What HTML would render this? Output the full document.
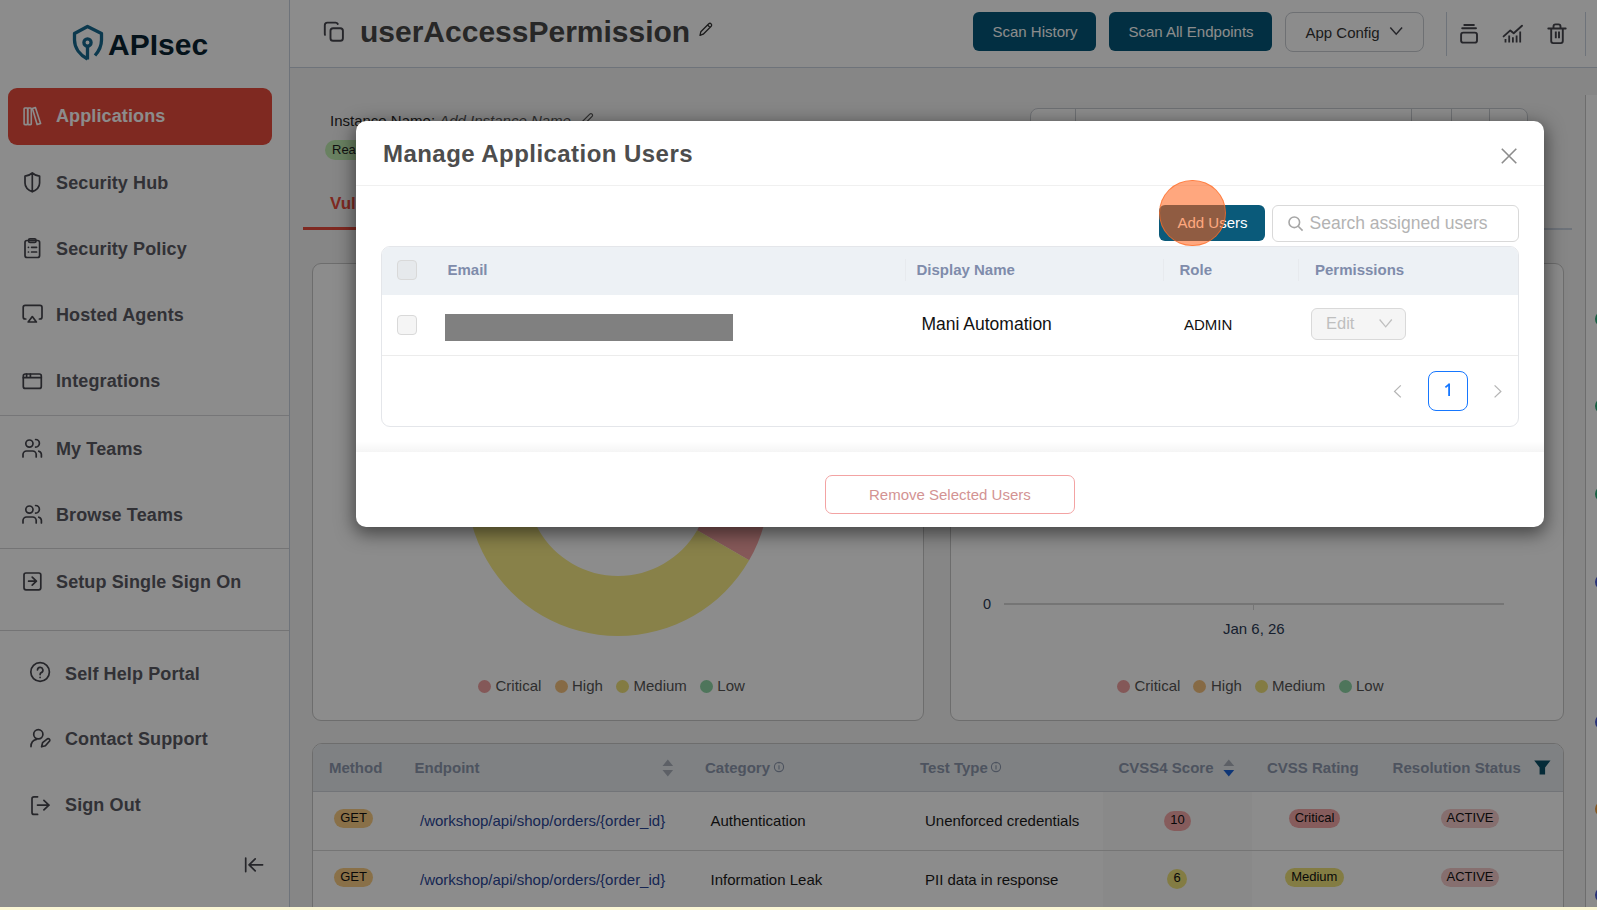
<!DOCTYPE html>
<html><head><meta charset="utf-8">
<style>
*{box-sizing:border-box;margin:0;padding:0}
html,body{width:1597px;height:910px;overflow:hidden;background:#f5f5f5;font-family:"Liberation Sans",sans-serif;color:#222;position:relative}
.tx{position:absolute;line-height:1;white-space:nowrap}
.bx{position:absolute}
svg{position:absolute;overflow:visible}
</style></head><body>
<div class="bx" style="left:0px;top:0px;width:289px;height:910px;background:#fff"></div>
<div class="bx" style="left:289px;top:0px;width:1px;height:910px;background:#c9d1de"></div>
<div class="bx" style="left:0px;top:415px;width:289px;height:1px;background:#d8d8da"></div>
<div class="bx" style="left:0px;top:548px;width:289px;height:1px;background:#d4d4d6"></div>
<div class="bx" style="left:0px;top:630px;width:289px;height:1px;background:#d4d4d6"></div>
<div class="bx" style="left:8px;top:88px;width:264px;height:57px;background:#e84c3d;border-radius:9px"></div>
<div class="tx " style="left:56px;top:107px;font-size:18px;color:#fff;font-weight:bold;letter-spacing:0.12px">Applications</div>
<div class="tx " style="left:56px;top:174px;font-size:18px;color:#5a5a63;font-weight:bold;letter-spacing:0.12px">Security Hub</div>
<div class="tx " style="left:56px;top:240px;font-size:18px;color:#5a5a63;font-weight:bold;letter-spacing:0.12px">Security Policy</div>
<div class="tx " style="left:56px;top:306px;font-size:18px;color:#5a5a63;font-weight:bold;letter-spacing:0.12px">Hosted Agents</div>
<div class="tx " style="left:56px;top:372px;font-size:18px;color:#5a5a63;font-weight:bold;letter-spacing:0.12px">Integrations</div>
<div class="tx " style="left:56px;top:440px;font-size:18px;color:#5a5a63;font-weight:bold;letter-spacing:0.12px">My Teams</div>
<div class="tx " style="left:56px;top:506px;font-size:18px;color:#5a5a63;font-weight:bold;letter-spacing:0.12px">Browse Teams</div>
<div class="tx " style="left:56px;top:573px;font-size:18px;color:#5a5a63;font-weight:bold;letter-spacing:0.12px">Setup Single Sign On</div>
<div class="tx " style="left:65px;top:665px;font-size:18px;color:#5a5a63;font-weight:bold;letter-spacing:0.12px">Self Help Portal</div>
<div class="tx " style="left:65px;top:730px;font-size:18px;color:#5a5a63;font-weight:bold;letter-spacing:0.12px">Contact Support</div>
<div class="tx " style="left:65px;top:796px;font-size:18px;color:#5a5a63;font-weight:bold;letter-spacing:0.12px">Sign Out</div>
<svg style="left:0;top:0" width="290" height="910" viewBox="0 0 290 910">
<g fill="none" stroke="#17698f" stroke-width="3.3" stroke-linejoin="round">
  <path d="M87.5 59 C80 55 74.5 48 74.5 40 L74.5 33.5 L87.5 26.5 L101.5 33.5 L101.5 40 C101.5 46 99 51 95 55.5"/>
  <circle cx="87.5" cy="42.5" r="3.6"/>
  <path d="M87.5 46 L87.5 59.5"/>
</g>
<text x="108" y="54.7" font-family="Liberation Sans" font-weight="bold" font-size="30" fill="#0a2432">APIsec</text>
<g fill="none" stroke="#fff" stroke-width="1.6" stroke-linejoin="round" stroke-linecap="round">
  <rect x="24.1" y="108" width="3.6" height="16.6" rx="0.8"/>
  <rect x="27.7" y="108" width="3.6" height="16.6" rx="0.8"/>
  <path d="M32.4 108.6 L35.4 107.6 L40.6 123.4 L37.1 124.6 Z"/>
</g>
<g fill="none" stroke="#45454d" stroke-width="1.7" stroke-linejoin="round" stroke-linecap="round">
  <path d="M32.3 173 C30 175 27.5 176 25 176.2 L25 183 C25 187 28 190 32.3 191.8 C36.6 190 39.6 187 39.6 183 L39.6 176.2 C37 176 34.6 175 32.3 173 Z M32.3 173 L32.3 191.8"/>
  <rect x="25" y="240.5" width="14.6" height="17" rx="2"/>
  <rect x="28.6" y="238.8" width="7.4" height="3.6" rx="1.4"/>
  <path d="M28.4 247.3 h0.1 M31.6 247.3 h5 M28.4 252 h0.1 M31.6 252 h5"/>
  <path d="M25.8 319 h-0.6 a2 2 0 0 1 -2 -2 v-9.6 a2 2 0 0 1 2 -2 h14.8 a2 2 0 0 1 2 2 v9.6 a2 2 0 0 1 -2 2 h-0.6"/>
  <path d="M32.3 316.6 L36.4 322 L28.2 322 Z"/>
  <rect x="23.3" y="374" width="18" height="14.4" rx="2"/>
  <path d="M23.3 377.7 h18 M26.6 374 v3.7 M30.4 374 v3.7"/>
  <circle cx="29.4" cy="443.6" r="3.6"/>
  <path d="M23 457 v-2.4 a3.6 3.6 0 0 1 3.6 -3.6 h6 a3.6 3.6 0 0 1 3.6 3.6 v2.4"/>
  <path d="M35.6 439.5 a3.8 3.8 0 0 1 0 7.6"/>
  <path d="M38.8 451.2 a3.6 3.6 0 0 1 2.6 3.4 v2.4"/>
  <circle cx="29.4" cy="509.6" r="3.6"/>
  <path d="M23 523 v-2.4 a3.6 3.6 0 0 1 3.6 -3.6 h6 a3.6 3.6 0 0 1 3.6 3.6 v2.4"/>
  <path d="M35.6 505.5 a3.8 3.8 0 0 1 0 7.6"/>
  <path d="M38.8 517.2 a3.6 3.6 0 0 1 2.6 3.4 v2.4"/>
  <rect x="24" y="573" width="16.8" height="16.8" rx="2"/>
  <path d="M28.6 581.2 h7.8 M32.2 577.2 l4.2 4 l-4.2 4"/>
  <circle cx="40.1" cy="672" r="9.3"/>
  <path d="M37.5 670 a2.7 2.7 0 1 1 3.8 2.6 c-0.7 0.4 -1.2 1 -1.2 1.8 v0.2 M40.1 677.4 v0.1"/>
  <circle cx="38.3" cy="734.3" r="4.6"/>
  <path d="M31 746.6 C31 743 33 740 36.5 739.3"/>
  <path d="M41.6 746.8 L42.6 742.6 L47.4 738.8 a1.6 1.6 0 0 1 2.2 2.2 L45.4 745.8 Z"/>
  <path d="M37.6 796.8 h-3.6 a2 2 0 0 0 -2 2 v13.6 a2 2 0 0 0 2 2 h3.6 M37.5 805.1 h11.6 M43.9 800.3 l5 4.8 l-5 4.8"/>
  <path d="M245.7 858 v13.6 M249 864.8 h13.6 M255.2 858.8 l-6.1 6 l6.1 6"/>
</g>
</svg>
<div class="bx" style="left:290px;top:0px;width:1307px;height:67px;background:#fff"></div>
<div class="bx" style="left:290px;top:67px;width:1307px;height:1px;background:#c9d1de"></div>
<div class="tx " style="left:360px;top:17px;font-size:30px;color:#474747;font-weight:bold;">userAccessPermission</div>
<svg style="left:0;top:0" width="1597" height="70" viewBox="0 0 1597 70">
<g fill="none" stroke="#45454d" stroke-width="1.9" stroke-linejoin="round" stroke-linecap="round">
  <path d="M325 34.8 a2.2 2.2 0 0 1 -0.2 -1 v-8.6 a2.6 2.6 0 0 1 2.6 -2.6 h8 a2.6 2.6 0 0 1 2.4 1.4"/>
  <rect x="330.5" y="28.2" width="12.4" height="12.6" rx="2.6"/>
</g>
<g fill="none" stroke="#333" stroke-width="1.3" stroke-linejoin="round">
  <path d="M700 35.4 L700.8 31.8 L708.8 23.8 a1.7 1.7 0 0 1 2.4 2.4 L703.2 34.2 Z M707.6 25 l2.4 2.4"/>
</g>
<g fill="none" stroke="#45454d" stroke-width="1.9" stroke-linejoin="round" stroke-linecap="round">
  <path d="M1464.3 25 h9.6 M1462.2 28.3 h13.8"/>
  <rect x="1461.1" y="32.6" width="15.9" height="10" rx="2.2"/>
  <path d="M1503.6 36.4 L1510.3 30.4 L1513.7 33.2 L1522 25.7"/>
  <path d="M1505.5 42.6 v-3.6 M1509.2 42.6 v-7.2 M1512.9 42.6 v-5.4 M1516.6 42.6 v-7.2 M1520.2 42.6 v-11" stroke-linecap="butt" stroke-width="1.8"/>
  <path d="M1548.3 28.5 h17.4 M1551.2 28.5 v12.6 a2 2 0 0 0 2 2 h7.6 a2 2 0 0 0 2 -2 v-12.6 M1553.5 28.2 v-1.8 a2 2 0 0 1 2 -2 h3 a2 2 0 0 1 2 2 v1.8"/>
  <path d="M1555.8 31.6 v6.6 M1559 31.6 v6.6" stroke-linecap="butt"/>
</g>
</svg>
<div class="bx" style="left:973px;top:12px;width:123px;height:39px;background:#045778;border-radius:6px"></div>
<div class="tx " style="left:992.5px;top:24px;font-size:15px;color:#fff;font-weight:normal;">Scan History</div>
<div class="bx" style="left:1109px;top:12px;width:163px;height:39px;background:#045778;border-radius:6px"></div>
<div class="tx " style="left:1128.5px;top:24px;font-size:15px;color:#fff;font-weight:normal;">Scan All Endpoints</div>
<div class="bx" style="left:1285px;top:12px;width:139px;height:40px;background:#fff;border:1px solid #c8ccd2;border-radius:8px"></div>
<div class="tx " style="left:1305.5px;top:25px;font-size:15px;color:#333;font-weight:normal;">App Config</div>
<svg style="left:0;top:0" width="1597" height="70"><path d="M1390.3 27.6 l5.9 6.6 l5.9 -6.6" fill="none" stroke="#45454d" stroke-width="1.5"/></svg>
<div class="bx" style="left:1446px;top:12px;width:1px;height:44px;background:#c9d1de"></div>
<div class="bx" style="left:1585px;top:12px;width:1px;height:44px;background:#c9d1de"></div>
<div class="tx " style="left:330px;top:112.5px;font-size:15px;color:#262626;font-weight:normal;">Instance Name: <i style="color:#555">Add Instance Name</i></div>
<svg style="left:0;top:0" width="1597" height="200"><path d="M581.5 125 L582.3 121.6 L589.8 114.1 a1.6 1.6 0 0 1 2.3 2.3 L584.6 123.9 Z" fill="none" stroke="#555" stroke-width="1.2"/></svg>
<div class="bx" style="left:325px;top:140px;width:90px;height:20px;background:#c0ecb1;border-radius:10px"></div>
<div class="tx " style="left:332px;top:143px;font-size:13px;color:#222;font-weight:normal;">Ready</div>
<div class="tx " style="left:330px;top:195px;font-size:17px;color:#e84c3d;font-weight:bold;">Vulnerabilities</div>
<div class="bx" style="left:303px;top:228px;width:1269px;height:1.5px;background:#c9d1de"></div>
<div class="bx" style="left:303px;top:227px;width:200px;height:3px;background:#e84c3d"></div>
<div class="bx" style="left:1030px;top:108px;width:498px;height:40px;background:#fff;border:1px solid #c8ccd2;border-radius:8px"></div>
<div class="bx" style="left:1075px;top:108px;width:1px;height:40px;background:#c8ccd2"></div>
<div class="bx" style="left:1411px;top:108px;width:1px;height:40px;background:#c8ccd2"></div>
<div class="bx" style="left:1451px;top:108px;width:1px;height:40px;background:#c8ccd2"></div>
<div class="bx" style="left:1489px;top:108px;width:1px;height:40px;background:#c8ccd2"></div>
<div class="bx" style="left:1585px;top:95px;width:12px;height:815px;background:#fff;border-left:1px solid #c6c6c6"></div>
<div class="bx" style="left:1595px;top:311px;width:16px;height:16px;border-radius:50%;background:#2fae7a"></div>
<div class="bx" style="left:1595px;top:398px;width:16px;height:16px;border-radius:50%;background:#2fae7a"></div>
<div class="bx" style="left:1595px;top:485.5px;width:16px;height:16px;border-radius:50%;background:#2fae7a"></div>
<div class="bx" style="left:1595px;top:573.5px;width:16px;height:16px;border-radius:50%;background:#4a5bd8"></div>
<div class="bx" style="left:1595px;top:713.7px;width:16px;height:16px;border-radius:50%;background:#4a5bd8"></div>
<div class="bx" style="left:1595px;top:801px;width:16px;height:16px;border-radius:50%;background:#f0a040"></div>
<div class="bx" style="left:1595px;top:887px;width:16px;height:16px;border-radius:50%;background:#4a5bd8"></div>
<div class="bx" style="left:312px;top:263px;width:612px;height:458px;background:#fff;border:1px solid #c6c6c6;border-radius:9px"></div>
<div class="bx" style="left:950px;top:263px;width:614px;height:458px;background:#fff;border:1px solid #c6c6c6;border-radius:9px"></div>
<svg style="left:0;top:0" width="1597" height="910"><path d="M618.00 333.20 A151.4 151.4 0 0 1 749.12 560.30 L697.15 530.30 A91.4 91.4 0 0 0 618.00 393.20 Z" fill="#f5a3a3"/><path d="M749.12 560.30 A151.4 151.4 0 1 1 617.97 333.20 L617.98 393.20 A91.4 91.4 0 1 0 697.15 530.30 Z" fill="#f7eb85"/></svg>
<div class="bx" style="left:477.9px;top:679.5px;width:13px;height:13px;border-radius:50%;background:#f0a0a0"></div>
<div class="tx " style="left:495.5px;top:678px;font-size:15px;color:#555;font-weight:normal;">Critical</div>
<div class="bx" style="left:554.5px;top:679.5px;width:13px;height:13px;border-radius:50%;background:#f5c27e"></div>
<div class="tx " style="left:572px;top:678px;font-size:15px;color:#555;font-weight:normal;">High</div>
<div class="bx" style="left:615.6px;top:679.5px;width:13px;height:13px;border-radius:50%;background:#eee07a"></div>
<div class="tx " style="left:633.5px;top:678px;font-size:15px;color:#555;font-weight:normal;">Medium</div>
<div class="bx" style="left:700.0px;top:679.5px;width:13px;height:13px;border-radius:50%;background:#8fd5a6"></div>
<div class="tx " style="left:717.3px;top:678px;font-size:15px;color:#555;font-weight:normal;">Low</div>
<div class="bx" style="left:1116.7px;top:679.5px;width:13px;height:13px;border-radius:50%;background:#f0a0a0"></div>
<div class="tx " style="left:1134.5px;top:678px;font-size:15px;color:#555;font-weight:normal;">Critical</div>
<div class="bx" style="left:1193.2px;top:679.5px;width:13px;height:13px;border-radius:50%;background:#f5c27e"></div>
<div class="tx " style="left:1211px;top:678px;font-size:15px;color:#555;font-weight:normal;">High</div>
<div class="bx" style="left:1254.5px;top:679.5px;width:13px;height:13px;border-radius:50%;background:#eee07a"></div>
<div class="tx " style="left:1272px;top:678px;font-size:15px;color:#555;font-weight:normal;">Medium</div>
<div class="bx" style="left:1338.7px;top:679.5px;width:13px;height:13px;border-radius:50%;background:#8fd5a6"></div>
<div class="tx " style="left:1356px;top:678px;font-size:15px;color:#555;font-weight:normal;">Low</div>
<div class="tx " style="left:983px;top:597px;font-size:14.5px;color:#2a3a55;font-weight:normal;">0</div>
<div class="bx" style="left:1004px;top:603px;width:500px;height:1.5px;background:#d6d6d6"></div>
<div class="bx" style="left:1252.5px;top:603px;width:1.5px;height:7px;background:#d6d6d6"></div>
<div class="tx " style="left:1223px;top:620.5px;font-size:15px;color:#2a3a55;font-weight:normal;">Jan 6, 26</div>
<div class="bx" style="left:312px;top:743px;width:1252px;height:170px;background:#fff;border:1px solid #c6c6c6;border-radius:10px 10px 0 0;overflow:hidden"></div>
<div class="bx" style="left:313px;top:744px;width:1250px;height:47px;background:#e7ebef;border-radius:9px 9px 0 0"></div>
<div class="bx" style="left:1103px;top:792px;width:149px;height:118px;background:rgba(0,0,0,0.025)"></div>
<div class="bx" style="left:313px;top:791px;width:1250px;height:1px;background:#d0d4da"></div>
<div class="bx" style="left:313px;top:850px;width:1250px;height:1px;background:#d6d6d6"></div>
<div class="tx " style="left:329px;top:759.5px;font-size:15px;color:#8d98ad;font-weight:bold;">Method</div>
<div class="tx " style="left:414.5px;top:759.5px;font-size:15px;color:#8d98ad;font-weight:bold;">Endpoint</div>
<div class="tx " style="left:705px;top:759.5px;font-size:15px;color:#8d98ad;font-weight:bold;">Category</div>
<div class="tx " style="left:920px;top:759.5px;font-size:15px;color:#8d98ad;font-weight:bold;">Test Type</div>
<div class="tx " style="left:1118.5px;top:759.5px;font-size:15px;color:#8d98ad;font-weight:bold;">CVSS4 Score</div>
<div class="tx " style="left:1267px;top:759.5px;font-size:15px;color:#8d98ad;font-weight:bold;">CVSS Rating</div>
<div class="tx " style="left:1392.5px;top:759.5px;font-size:15px;color:#8d98ad;font-weight:bold;letter-spacing:0.05px">Resolution Status</div>
<svg style="left:0;top:0" width="1597" height="910">
<path d="M662.5 766 l5.3 -6.4 l5.3 6.4 Z M662.5 770 l5.3 6.4 l5.3 -6.4 Z" fill="#a9b0bb"/>
<path d="M1223.4 766 l5.4 -6.4 l5.4 6.4 Z" fill="#a9b0bb"/>
<path d="M1223.4 770 l5.4 6.4 l5.4 -6.4 Z" fill="#1d63d8"/>
<g fill="none" stroke="#8d98ad" stroke-width="1.1"><circle cx="779" cy="767" r="4.6"/><path d="M779 765.2 v4.4 M779 763.3 v0.4"/>
<circle cx="996" cy="767" r="4.6"/><path d="M996 765.2 v4.4 M996 763.3 v0.4"/></g>
<path d="M1534.2 760.4 h16.3 l-5.4 7.2 v7 h-5.5 v-7 Z" fill="#0a4f66"/>
</svg>
<div class="bx" style="left:334px;top:809px;width:39px;height:19px;background:#f9cd83;border-radius:9.5px;"></div>
<div class="tx" style="left:334px;top:808px;width:39px;height:19px;line-height:19px;text-align:center;font-size:13px;color:#111">GET</div>
<div class="tx " style="left:420px;top:813px;font-size:15px;color:#2a4697;font-weight:normal;">/workshop/api/shop/orders/{order_id}</div>
<div class="tx " style="left:710.5px;top:813px;font-size:15px;color:#1a1a1a;font-weight:normal;">Authentication</div>
<div class="tx " style="left:925px;top:813px;font-size:15px;color:#1a1a1a;font-weight:normal;">Unenforced credentials</div>
<div class="bx" style="left:1164px;top:811px;width:27px;height:20px;background:#f5a8a8;border-radius:10.0px;"></div>
<div class="tx" style="left:1164px;top:810px;width:27px;height:20px;line-height:20px;text-align:center;font-size:13px;color:#111">10</div>
<div class="bx" style="left:1289px;top:809px;width:51px;height:19px;background:#f5a8a8;border-radius:9.5px;"></div>
<div class="tx" style="left:1289px;top:808px;width:51px;height:19px;line-height:19px;text-align:center;font-size:13px;color:#111">Critical</div>
<div class="bx" style="left:1441px;top:809px;width:58px;height:19px;background:#f5caca;border-radius:9.5px;"></div>
<div class="tx" style="left:1441px;top:808px;width:58px;height:19px;line-height:19px;text-align:center;font-size:13px;color:#111">ACTIVE</div>
<div class="bx" style="left:334px;top:868px;width:39px;height:19px;background:#f9cd83;border-radius:9.5px;"></div>
<div class="tx" style="left:334px;top:867px;width:39px;height:19px;line-height:19px;text-align:center;font-size:13px;color:#111">GET</div>
<div class="tx " style="left:420px;top:872px;font-size:15px;color:#2a4697;font-weight:normal;">/workshop/api/shop/orders/{order_id}</div>
<div class="tx " style="left:710.5px;top:872px;font-size:15px;color:#1a1a1a;font-weight:normal;">Information Leak</div>
<div class="tx " style="left:925px;top:872px;font-size:15px;color:#1a1a1a;font-weight:normal;">PII data in response</div>
<div class="bx" style="left:1167px;top:869px;width:20px;height:20px;background:#eee27a;border-radius:10.0px;"></div>
<div class="tx" style="left:1167px;top:868px;width:20px;height:20px;line-height:20px;text-align:center;font-size:13px;color:#111">6</div>
<div class="bx" style="left:1285px;top:868px;width:58.5px;height:19px;background:#eee27a;border-radius:9.5px;"></div>
<div class="tx" style="left:1285px;top:867px;width:58.5px;height:19px;line-height:19px;text-align:center;font-size:13px;color:#111">Medium</div>
<div class="bx" style="left:1441px;top:868px;width:58px;height:19px;background:#f5caca;border-radius:9.5px;"></div>
<div class="tx" style="left:1441px;top:867px;width:58px;height:19px;line-height:19px;text-align:center;font-size:13px;color:#111">ACTIVE</div>
<div class="bx" style="left:0px;top:907px;width:1597px;height:3px;background:#fbf6d2"></div>
<div class="bx" style="left:0px;top:0px;width:1597px;height:910px;background:rgba(0,0,0,0.45)"></div>
<div class="bx" style="left:0px;top:907px;width:1597px;height:3px;background:#fbf7d6"></div>
<div class="bx" style="left:356px;top:121px;width:1188px;height:406px;background:#fff;border-radius:10px;box-shadow:0 5px 18px 2px rgba(0,0,0,0.5)"></div>
<div class="tx " style="left:383px;top:142px;font-size:24px;color:#4d4d4d;font-weight:bold;letter-spacing:0.45px">Manage Application Users</div>
<svg style="left:0;top:0" width="1597" height="910">
<path d="M1501.8 148.8 L1516.3 163.3 M1516.3 148.8 L1501.8 163.3" stroke="#8c8c8c" stroke-width="1.6"/>
</svg>
<div class="bx" style="left:356px;top:185px;width:1188px;height:1px;background:#f0f0f0"></div>
<div class="bx" style="left:1159px;top:205px;width:106px;height:36px;background:#0a5a7a;border-radius:6px"></div>
<div class="tx " style="left:1177.5px;top:215px;font-size:15px;color:#fff;font-weight:normal;">Add Users</div>
<div class="bx" style="left:1272px;top:205px;width:247px;height:37px;background:#fff;border:1px solid #d9d9d9;border-radius:6px"></div>
<svg style="left:0;top:0" width="1597" height="910">
<g fill="none" stroke="#a6a6a6" stroke-width="1.6"><circle cx="1294.3" cy="222.3" r="5.3"/><path d="M1298.2 226.2 L1302.6 230.6"/></g>
</svg>
<div class="tx " style="left:1309.5px;top:214.5px;font-size:17.5px;color:#b3b3b3;font-weight:normal;">Search assigned users</div>
<div class="bx" style="left:381px;top:246px;width:1138px;height:181px;background:#fff;border:1px solid #e4e6ea;border-radius:9px"></div>
<div class="bx" style="left:382px;top:247px;width:1136px;height:48px;background:#edf1f5;border-radius:8px 8px 0 0"></div>
<div class="bx" style="left:905px;top:259px;width:1px;height:22px;background:#e7eaee"></div>
<div class="bx" style="left:1163px;top:259px;width:1px;height:22px;background:#e7eaee"></div>
<div class="bx" style="left:1298px;top:259px;width:1px;height:22px;background:#e7eaee"></div>
<div class="bx" style="left:382px;top:355px;width:1136px;height:1px;background:#ececec"></div>
<div class="bx" style="left:397px;top:260px;width:20px;height:20px;background:#e6e9ec;border:1px solid #d9d9d9;border-radius:4px"></div>
<div class="bx" style="left:397px;top:315px;width:20px;height:20px;background:#f5f5f5;border:1px solid #d9d9d9;border-radius:4px"></div>
<div class="tx " style="left:447.5px;top:262px;font-size:15px;color:#7f8cab;font-weight:bold;">Email</div>
<div class="tx " style="left:916.5px;top:262px;font-size:15px;color:#7f8cab;font-weight:bold;">Display Name</div>
<div class="tx " style="left:1179.5px;top:262px;font-size:15px;color:#7f8cab;font-weight:bold;">Role</div>
<div class="tx " style="left:1315px;top:262px;font-size:15px;color:#7f8cab;font-weight:bold;">Permissions</div>
<div class="bx" style="left:445px;top:314px;width:288px;height:27px;background:#808080"></div>
<div class="tx " style="left:921.5px;top:316px;font-size:17.5px;color:#111;font-weight:normal;">Mani Automation</div>
<div class="tx " style="left:1184px;top:317px;font-size:15px;color:#111;font-weight:normal;">ADMIN</div>
<div class="bx" style="left:1311px;top:308px;width:95px;height:32px;background:#f5f5f5;border:1px solid #d9d9d9;border-radius:6px"></div>
<div class="tx " style="left:1326px;top:315px;font-size:16.5px;color:#bfbfbf;font-weight:normal;">Edit</div>
<svg style="left:0;top:0" width="1597" height="910">
<path d="M1379.6 319.5 L1385.7 326.8 L1391.8 319.5" fill="none" stroke="#bfbfbf" stroke-width="1.3"/>
<path d="M1400.8 385.4 L1394.6 391.4 L1400.8 397.4 M1494.6 385.4 L1500.8 391.4 L1494.6 397.4" fill="none" stroke="#b5b5b5" stroke-width="1.3"/>
</svg>
<div class="bx" style="left:1428px;top:371px;width:40px;height:40px;background:#fff;border:1.5px solid #1677ff;border-radius:8px"></div>
<svg style="left:0;top:0" width="1597" height="910"><path d="M1449.1 396 V383.6 M1449.6 383.9 L1445.4 387.4" fill="none" stroke="#1677ff" stroke-width="1.8"/></svg>
<div class="bx" style="left:356px;top:441px;width:1188px;height:11px;background:linear-gradient(to bottom,rgba(0,0,0,0),rgba(0,0,0,0.04))"></div>
<div class="bx" style="left:825px;top:475px;width:250px;height:39px;background:#fff;border:1px solid #f3a3a3;border-radius:7px"></div>
<div class="tx " style="left:869px;top:487px;font-size:15px;color:#d39393;font-weight:normal;">Remove Selected Users</div>
<div class="bx" style="left:1159px;top:179.8px;width:66.6px;height:66.6px;border-radius:50%;background:rgba(255,95,20,0.55);border:1px solid rgba(255,110,40,0.7)"></div>
</body></html>
